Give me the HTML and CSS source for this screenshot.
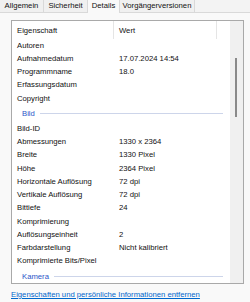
FILE: index.html
```html
<!DOCTYPE html>
<html lang="de">

<head>
  <meta charset="UTF-8">
  <title>Eigenschaften</title>
  <link rel="stylesheet" href="styles.css">
</head>

<body>
  <div class="tabs">
    <div class="tab tab-allgemein">Allgemein</div>
    <div class="tab tab-sicherheit">Sicherheit</div>
    <div class="tab tab-details active">Details</div>
    <div class="tab tab-versionen">Vorgängerversionen</div>
  </div>

  <div class="page">
    <div class="listbox">
      <div class="list">
        <div class="head">
          <span class="c1">Eigenschaft</span>
          <span class="c2">Wert</span>
        </div>
        <div class="row"><span class="c1">Autoren</span><span class="c2"></span></div>
        <div class="row"><span class="c1">Aufnahmedatum</span><span class="c2">17.07.2024 14:54</span></div>
        <div class="row"><span class="c1">Programmname</span><span class="c2">18.0</span></div>
        <div class="row"><span class="c1">Erfassungsdatum</span><span class="c2"></span></div>
        <div class="row"><span class="c1">Copyright</span><span class="c2"></span></div>
        <div class="group"><span>Bild</span></div>
        <div class="row"><span class="c1">Bild-ID</span><span class="c2"></span></div>
        <div class="row"><span class="c1">Abmessungen</span><span class="c2">1330 x 2364</span></div>
        <div class="row"><span class="c1">Breite</span><span class="c2">1330 Pixel</span></div>
        <div class="row"><span class="c1">Höhe</span><span class="c2">2364 Pixel</span></div>
        <div class="row"><span class="c1">Horizontale Auflösung</span><span class="c2">72 dpi</span></div>
        <div class="row"><span class="c1">Vertikale Auflösung</span><span class="c2">72 dpi</span></div>
        <div class="row"><span class="c1">Bittiefe</span><span class="c2">24</span></div>
        <div class="row"><span class="c1">Komprimierung</span><span class="c2"></span></div>
        <div class="row"><span class="c1">Auflösungseinheit</span><span class="c2">2</span></div>
        <div class="row"><span class="c1">Farbdarstellung</span><span class="c2">Nicht kalibriert</span></div>
        <div class="row"><span class="c1">Komprimierte Bits/Pixel</span><span class="c2"></span></div>
        <div class="group"><span>Kamera</span></div>
      </div>
      <div class="scroll">
        <div class="thumb"></div>
      </div>
    </div>

    <a class="link" href="#">Eigenschaften und persönliche Informationen entfernen</a>
  </div>
</body>

</html>
```

FILE: styles.css
```css
body {
  margin: 0px;
  padding: 0px;
  width: 250px;
  height: 302px;
  overflow: hidden;
  background-color: #f9f9f9;
  font-family: "Liberation Sans", Arial, sans-serif;
  font-size: 7.7px;
  color: #111;
}

/* reiter oben */
.tabs {
  display: flex;
  height: 12px;
  border-bottom: solid 1px #d9d9d9;
  background-color: #f3f3f3;
}

.tab {
  box-sizing: border-box;
  height: 12px;
  line-height: 12px;
  text-align: center;
  white-space: nowrap;
  background-color: #f0f0f0;
  border-right: solid 1px #d9d9d9;
}

.tab-allgemein {
  width: 44px;
}

.tab-sicherheit {
  width: 44px;
}

.tab-details {
  width: 32px;
}

.tab-versionen {
  width: 75px;
}

.tab.active {
  height: 13px;
  margin-bottom: -1px;
  background-color: #f9f9f9;
}

.page {
  padding-top: 7px;
  padding-left: 11px;
}

/* liste */
.listbox {
  display: flex;
  width: 233px;
  height: 264px;
  box-sizing: border-box;
  border: solid 1px #a9a9a9;
  background-color: white;
}

.list {
  flex: 1;
  overflow: hidden;
}

.head {
  display: flex;
  align-items: center;
  height: 17.5px;
}

.row {
  display: flex;
  align-items: center;
  height: 13.25px;
  white-space: nowrap;
}

.c1 {
  box-sizing: border-box;
  width: 102px;
  padding-left: 5px;
  flex-shrink: 0;
}

.c2 {
  box-sizing: border-box;
  width: 103px;
  padding-left: 5px;
}

.head .c1,
.head .c2 {
  height: 17.5px;
  line-height: 19px;
  border-right: solid 1px #e5e5e5;
}

.group {
  display: flex;
  align-items: center;
  height: 17px;
  padding-left: 10px;
  padding-right: 7px;
  color: #2b55c8;
}

.group::after {
  content: "";
  flex: 1;
  height: 1px;
  margin-left: 5px;
  background-color: #cdd5ea;
}

.scroll {
  width: 13px;
  background-color: #f0f0f0;
}

.thumb {
  width: 2px;
  height: 59px;
  margin-top: 37px;
  margin-left: 5px;
  background-color: #8a8a8a;
}

.link {
  display: inline-block;
  margin-top: 6px;
  color: #0066cc;
  text-decoration: underline;
  white-space: nowrap;
}
```
